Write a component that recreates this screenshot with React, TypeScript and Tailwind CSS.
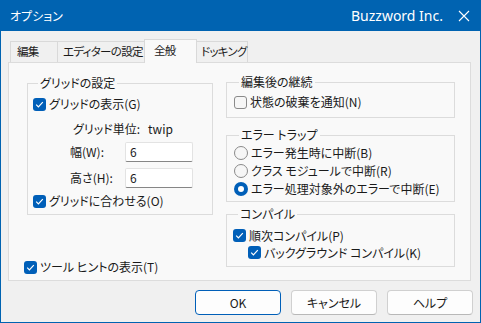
import React from "react";

const jp = "font-['Noto_Sans_CJK_JP',sans-serif] [font-feature-settings:'palt'] whitespace-nowrap";

function Check({ checked = true }: { checked?: boolean }) {
	if (!checked) {
		return <span className="w-[13px] h-[13px] rounded-[3px] border border-[#8a8a8a] bg-[#f6f6f6] shrink-0" />;
	}
	return (
		<span className="w-[13px] h-[13px] rounded-[3px] bg-[#005fb8] shrink-0 flex items-center justify-center">
			<svg width="13" height="13" viewBox="0 0 13 13">
				<path d="M3.2 6.6 L5.4 8.8 L9.8 4.2" fill="none" stroke="white" strokeWidth="1.2" />
			</svg>
		</span>
	);
}

function Radio({ checked = false }: { checked?: boolean }) {
	if (checked) {
		return (
			<span className="w-[14px] h-[14px] rounded-full bg-[#005fb8] shrink-0 flex items-center justify-center">
				<span className="w-[6px] h-[6px] rounded-full bg-white" />
			</span>
		);
	}
	return <span className="w-[14px] h-[14px] rounded-full border border-[#8a8a8a] bg-[#f6f6f6] shrink-0" />;
}

function Row({ children, className = "" }: { children: React.ReactNode; className?: string }) {
	return <div className={"flex items-center gap-[3px] " + className}>{children}</div>;
}

function Legend({ children }: { children: React.ReactNode }) {
	return <legend className="ml-[5px] px-[2px] h-[16px] leading-[16px]">{children}</legend>;
}

export default function App() {
	return (
		<div className={"w-[481px] h-[323px] bg-[#0063b1] flex flex-col px-px pb-px text-[12px] text-[#1a1a1a] " + jp}>
			{/* title bar */}
			<div className="h-[31px] flex items-center pl-[9px] pr-[10px] text-white shrink-0">
				<span className="text-[12px]">オプション</span>
				<span className="ml-auto text-[14px] font-['Noto_Sans',sans-serif]">Buzzword Inc.</span>
				<svg className="ml-[15px]" width="12" height="12" viewBox="0 0 12 12">
					<path d="M1 1 L11 11 M11 1 L1 11" stroke="white" strokeWidth="1.1" />
				</svg>
			</div>

			<div className="flex-1 bg-[#f0f0f0] flex flex-col">
				{/* tabs */}
				<div className="flex items-end pl-[9px] h-[31px] text-[11.5px] tracking-[-0.7px]">
					<div className="w-[48px] h-[21px] border border-b-0 border-[#d9d9d9] flex items-center pl-[6px]">編集</div>
					<div className="w-[88px] h-[21px] -ml-px border border-b-0 border-[#d9d9d9] flex items-center pl-[5px]">エディターの設定</div>
					<div className="w-[53px] h-[24px] -ml-px -mb-px z-10 border border-b-0 border-[#d9d9d9] bg-[#f9f9f9] flex items-center pl-[9px] pb-[2px]">全般</div>
					<div className="w-[52px] h-[21px] -ml-px border border-b-0 border-[#d9d9d9] flex items-center pl-[4px]">ドッキング</div>
				</div>

				{/* panel */}
				<div className="ml-[7px] w-[463px] h-[219px] border border-[#dcdcdc] bg-[#f9f9f9] flex pt-[11px] pl-[18px] pr-[15px] pb-[5px] gap-[13px]">
					{/* left */}
					<div className="w-[186px] flex flex-col">
						<fieldset className="mt-px border border-[#dcdcdc] px-[5px] pb-[5px]">
							<Legend>グリッドの設定</Legend>
							<Row className="h-[16px] mt-[5px]">
								<Check />
								<span>グリッドの表示(G)</span>
							</Row>
							<div className="h-[16px] mt-[9px] flex items-center gap-[8px] pl-[40px]">
								<span>グリッド単位:</span>
								<span>twip</span>
							</div>
							<div className="h-[20px] mt-[5px] flex items-center pl-[37px]">
								<span className="w-[55px]">幅(W):</span>
								<span className="w-[68px] h-[20px] bg-white border border-[#e3e3e3] border-b-[#868686] rounded-[2px] pl-[4px] leading-[18px]">6</span>
							</div>
							<div className="h-[20px] mt-[6px] flex items-center pl-[37px]">
								<span className="w-[55px]">高さ(H):</span>
								<span className="w-[68px] h-[20px] bg-white border border-[#e3e3e3] border-b-[#868686] rounded-[2px] pl-[4px] leading-[18px]">6</span>
							</div>
							<Row className="h-[16px] mt-[5px]">
								<Check />
								<span>グリッドに合わせる(O)</span>
							</Row>
						</fieldset>
						<Row className="h-[16px] mt-auto -ml-[3px]">
							<Check />
							<span>ツール ヒントの表示(T)</span>
						</Row>
					</div>

					{/* right */}
					<div className="w-[229px] flex flex-col">
						<fieldset className="border border-[#dcdcdc] px-[7px] pb-[7px]">
							<Legend>編集後の継続</Legend>
							<Row className="h-[16px] mt-[4px]">
								<Check checked={false} />
								<span>状態の破棄を通知(N)</span>
							</Row>
						</fieldset>

						<fieldset className="mt-[9px] border border-[#dcdcdc] px-[7px] pb-[3px]">
							<Legend>エラー トラップ</Legend>
							<div className="mt-px flex flex-col">
								<Row className="h-[18px]">
									<Radio />
									<span>エラー発生時に中断(B)</span>
								</Row>
								<Row className="h-[18px]">
									<Radio />
									<span>クラス モジュールで中断(R)</span>
								</Row>
								<Row className="h-[18px]">
									<Radio checked />
									<span>エラー処理対象外のエラーで中断(E)</span>
								</Row>
							</div>
						</fieldset>

						<fieldset className="mt-[4px] border border-[#dcdcdc] px-[6px] pb-[5px]">
							<Legend>コンパイル</Legend>
							<Row className="h-[17px] mt-[5px]">
								<Check />
								<span>順次コンパイル(P)</span>
							</Row>
							<Row className="h-[17px] pl-[15px]">
								<Check />
								<span>バックグラウンド コンパイル(K)</span>
							</Row>
						</fieldset>
					</div>
				</div>

				{/* buttons */}
				<div className="mt-[9px] flex justify-end gap-[10px] pr-[7px]">
					<button className="w-[86px] h-[25px] rounded-[4px] border border-[#005fb8] bg-[#fdfdfd] flex items-center justify-center">OK</button>
					<button className="w-[86px] h-[25px] rounded-[4px] border border-[#d0d0d0] border-b-[#b8b8b8] bg-[#fdfdfd] flex items-center justify-center">キャンセル</button>
					<button className="w-[86px] h-[25px] rounded-[4px] border border-[#d0d0d0] border-b-[#b8b8b8] bg-[#fdfdfd] flex items-center justify-center">ヘルプ</button>
				</div>
			</div>
		</div>
	);
}
